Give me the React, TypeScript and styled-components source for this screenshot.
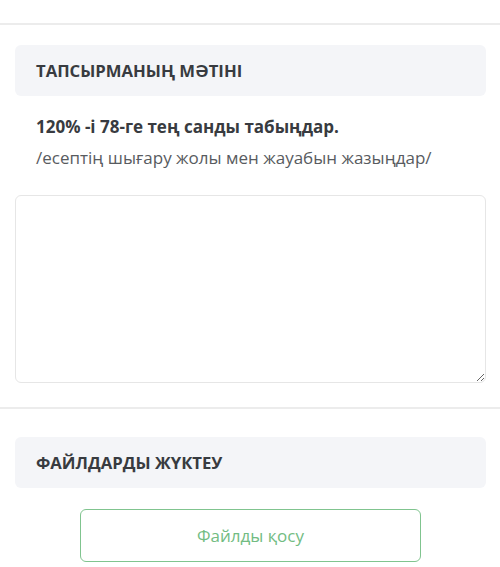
import styled, { createGlobalStyle } from "styled-components";

function App() {
  return (
    <>
      <GlobalStyle />
      <Page>
        <TopSpace />
        <Section>
          <SectionHeader>
            <SectionTitle>ТАПСЫРМАНЫҢ МӘТІНІ</SectionTitle>
          </SectionHeader>
          <TaskText>
            <Question>120% -і 78-ге тең санды табыңдар.</Question>
            <Hint>/есептің шығару жолы мен жауабын жазыңдар/</Hint>
          </TaskText>
          <Answer />
        </Section>
        <Section $top={28}>
          <SectionHeader>
            <SectionTitle>ФАЙЛДАРДЫ ЖҮКТЕУ</SectionTitle>
          </SectionHeader>
          <ButtonRow>
            <AddButton type="button">Файлды қосу</AddButton>
          </ButtonRow>
        </Section>
      </Page>
    </>
  );
}

const GlobalStyle = createGlobalStyle`
  body {
    margin: 0;
    background: #ffffff;
    font-family: "Open Sans", "Liberation Sans", sans-serif;
  }
  * {
    box-sizing: border-box;
  }
`;

const Page = styled.div`
  width: 500px;
  height: 567px;
  overflow: hidden;
  background: #ffffff;
`;

const TopSpace = styled.div`
  height: 23px;
`;

const Section = styled.section<{ $top?: number }>`
  border-top: 2px solid #ececec;
  padding: ${(p) => p.$top ?? 20}px 14px 24px 15px;
`;

const SectionHeader = styled.div`
  display: flex;
  align-items: center;
  height: 51px;
  padding: 0 21px;
  border-radius: 6px;
  background: #f4f5f8;
`;

const SectionTitle = styled.h2`
  margin: 0;
  font-size: 16.7px;
  font-weight: 700;
  color: #383b40;
`;

const TaskText = styled.div`
  display: flex;
  flex-direction: column;
  gap: 7px;
  padding: 19px 21px 25px;
`;

const Question = styled.p`
  margin: 0;
  font-size: 17px;
  font-weight: 700;
  line-height: 24px;
  color: #383b40;
`;

const Hint = styled.p`
  margin: 0;
  font-size: 17px;
  line-height: 24px;
  color: #585b60;
`;

const Answer = styled.textarea`
  display: block;
  width: 100%;
  height: 188px;
  border: 1.5px solid #e6e6e6;
  border-radius: 6px;
  background: #ffffff;
  resize: vertical;
  outline: none;
`;

const ButtonRow = styled.div`
  display: flex;
  padding: 21px 0 0 65px;
`;

const AddButton = styled.button`
  width: 341px;
  height: 53px;
  border: 1.5px solid #80c48f;
  border-radius: 6px;
  background: #ffffff;
  font-family: "Open Sans", "Liberation Sans", sans-serif;
  font-size: 17px;
  color: #72bc82;
  cursor: pointer;
`;

export default App;
